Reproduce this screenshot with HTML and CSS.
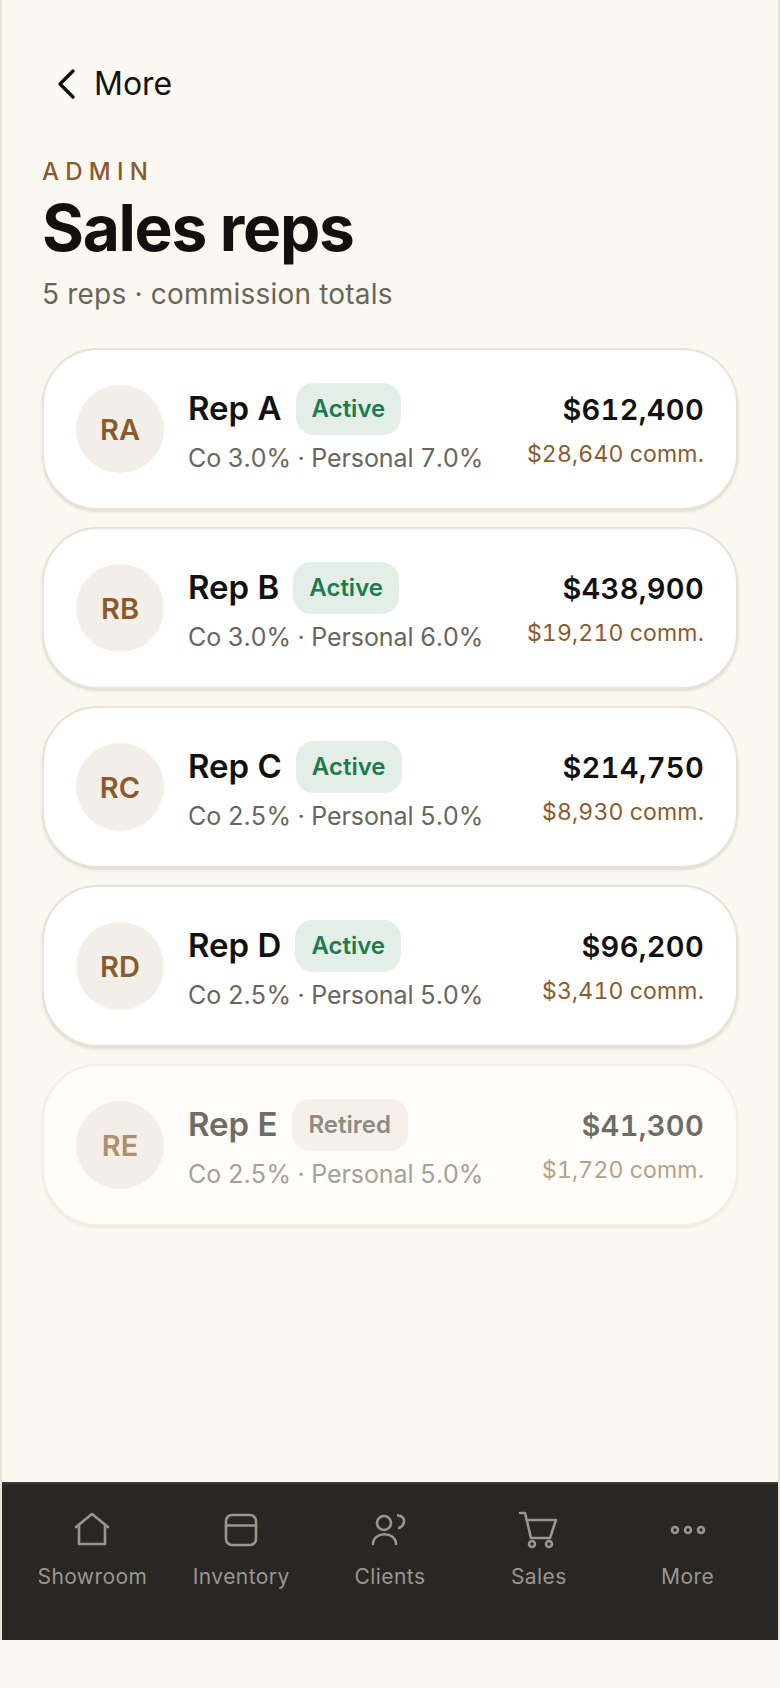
FILE: index.html
```html
<!DOCTYPE html>
<html lang="en">
<head>
  <meta charset="UTF-8">
  <title>Sales reps</title>
  <link rel="stylesheet" href="styles.css">
</head>
<body>

  <div class="shell">
    <main class="content">
      <a class="back">
        <svg class="back-icon" viewBox="0 0 24 32"><path d="M18 3 L5 16 L18 29"/></svg>
        More
      </a>

      <div class="eyebrow">ADMIN</div>
      <h1>Sales reps</h1>
      <p class="subtitle">5 reps · commission totals</p>

      <div class="rep-list">
        <div class="rep">
          <div class="avatar">RA</div>
          <div class="rep-info">
            <div class="rep-head"><span class="rep-name">Rep A</span><span class="badge">Active</span></div>
            <div class="rep-rates">Co 3.0% · Personal 7.0%</div>
          </div>
          <div class="rep-totals">
            <div class="amount">$612,400</div>
            <div class="comm">$28,640 comm.</div>
          </div>
        </div>

        <div class="rep">
          <div class="avatar">RB</div>
          <div class="rep-info">
            <div class="rep-head"><span class="rep-name">Rep B</span><span class="badge">Active</span></div>
            <div class="rep-rates">Co 3.0% · Personal 6.0%</div>
          </div>
          <div class="rep-totals">
            <div class="amount">$438,900</div>
            <div class="comm">$19,210 comm.</div>
          </div>
        </div>

        <div class="rep">
          <div class="avatar">RC</div>
          <div class="rep-info">
            <div class="rep-head"><span class="rep-name">Rep C</span><span class="badge">Active</span></div>
            <div class="rep-rates">Co 2.5% · Personal 5.0%</div>
          </div>
          <div class="rep-totals">
            <div class="amount">$214,750</div>
            <div class="comm">$8,930 comm.</div>
          </div>
        </div>

        <div class="rep">
          <div class="avatar">RD</div>
          <div class="rep-info">
            <div class="rep-head"><span class="rep-name">Rep D</span><span class="badge">Active</span></div>
            <div class="rep-rates">Co 2.5% · Personal 5.0%</div>
          </div>
          <div class="rep-totals">
            <div class="amount">$96,200</div>
            <div class="comm">$3,410 comm.</div>
          </div>
        </div>

        <div class="rep retired">
          <div class="avatar">RE</div>
          <div class="rep-info">
            <div class="rep-head"><span class="rep-name">Rep E</span><span class="badge">Retired</span></div>
            <div class="rep-rates">Co 2.5% · Personal 5.0%</div>
          </div>
          <div class="rep-totals">
            <div class="amount">$41,300</div>
            <div class="comm">$1,720 comm.</div>
          </div>
        </div>
      </div>
    </main>

    <nav class="tabbar">
      <div class="tab">
        <svg viewBox="0 0 44 44"><path d="M6 20 L22 7 L38 20"/><path d="M9 18 V37 H35 V18"/></svg>
        <span>Showroom</span>
      </div>
      <div class="tab">
        <svg viewBox="0 0 44 44"><rect x="7" y="8" width="30" height="30" rx="6"/><path d="M7 18.5 H37"/></svg>
        <span>Inventory</span>
      </div>
      <div class="tab">
        <svg viewBox="0 0 44 44"><circle cx="16" cy="16" r="7"/><path d="M5 37 C5 24 28 24 28 37"/><path class="butt" d="M29 8.5 C34 8 36.5 12 36 15 C35.5 18 33 21 30 21"/></svg>
        <span>Clients</span>
      </div>
      <div class="tab">
        <svg viewBox="0 0 44 44"><path d="M3 6 H8 L14 31 H33 L39 13 H9.5"/><circle cx="15" cy="37" r="3"/><circle cx="32" cy="37" r="3"/></svg>
        <span>Sales</span>
      </div>
      <div class="tab">
        <svg viewBox="0 0 44 44"><circle cx="9" cy="23" r="3"/><circle cx="22" cy="23" r="3"/><circle cx="35" cy="23" r="3"/></svg>
        <span>More</span>
      </div>
    </nav>
  </div>

</body>
</html>
```

FILE: styles.css
```css
* {
  box-sizing: border-box;
}

html, body {
  margin: 0;
  padding: 0;
}

body {
  width: 780px;
  height: 1688px;
  background: #fbf8f1;
  color: #12110f;
  font-family: "Inter", "Liberation Sans", sans-serif;
  overflow: hidden;
}

.shell {
  height: 1640px;
  display: flex;
  flex-direction: column;
  border-left: 2px solid #e8e2d8;
  border-right: 2px solid #e8e2d8;
}

.content {
  flex: 1;
  padding: 62px 40px 0;
}

.back {
  display: flex;
  align-items: center;
  gap: 15px;
  margin-left: 13px;
  height: 44px;
  font-size: 32px;
  line-height: 44px;
}

.back-icon {
  width: 24px;
  height: 32px;
  fill: none;
  stroke: #12110f;
  stroke-width: 3.4;
  stroke-linecap: round;
  stroke-linejoin: round;
}

.eyebrow {
  margin-top: 50px;
  font-size: 24px;
  line-height: 32px;
  font-weight: 500;
  letter-spacing: 0.26em;
  color: #8a5a2f;
}

h1 {
  margin: 4px 0 0;
  font-size: 64px;
  line-height: 72px;
  font-weight: 700;
  letter-spacing: -0.02em;
}

.subtitle {
  margin: 10px 0 0;
  font-size: 28px;
  line-height: 40px;
  letter-spacing: 0.2px;
  color: #6a655c;
}

.rep-list {
  margin-top: 34px;
  display: flex;
  flex-direction: column;
  gap: 17px;
}

.rep {
  display: flex;
  align-items: center;
  height: 162px;
  padding: 0 32px;
  background: #fff;
  border: 2px solid #e8e2d8;
  border-radius: 56px;
  box-shadow: 0 2px 3px rgba(60, 50, 30, 0.14);
}

.avatar {
  flex: none;
  width: 88px;
  height: 88px;
  display: flex;
  align-items: center;
  justify-content: center;
  border-radius: 50%;
  background: #f3efe8;
  color: #8a5a2f;
  font-size: 29px;
  font-weight: 600;
}

.rep-info {
  flex: 1;
  margin-left: 24px;
  min-width: 0;
}

.rep-head {
  display: flex;
  align-items: center;
  gap: 14px;
}

.rep-name {
  margin-bottom: 4px;
  font-size: 33px;
  font-weight: 600;
}

.badge {
  margin-bottom: 2px;
  padding: 0 16px;
  height: 52px;
  line-height: 52px;
  border-radius: 18px;
  background: #e3eee8;
  color: #1f7a4d;
  font-size: 24px;
  font-weight: 600;
}

.rep-rates {
  margin-top: 3px;
  font-size: 25px;
  line-height: 36px;
  letter-spacing: -0.1px;
  font-variant-numeric: tabular-nums;
  color: #6a655c;
  white-space: nowrap;
}

.rep-totals {
  padding-top: 2px;
  text-align: right;
  white-space: nowrap;
  font-variant-numeric: tabular-nums;
}

.amount {
  font-size: 29px;
  line-height: 40px;
  font-weight: 600;
  letter-spacing: 0.3px;
}

.comm {
  margin-top: 7px;
  font-size: 23px;
  line-height: 34px;
  letter-spacing: 0.15px;
  color: #8a5a2f;
}

.retired {
  background: #fefdfa;
  border-color: #f3efe8;
  box-shadow: 0 2px 3px rgba(60, 50, 30, 0.07);
}

.retired .rep-name,
.retired .amount {
  color: #6f6c66;
}

.retired .rep-rates {
  color: #a5a197;
}

.retired .avatar {
  color: #b08f6f;
}

.retired .comm {
  color: #b8a083;
}

.retired .badge {
  padding: 0 17px;
  background: #f5f1ea;
  color: #8e8b83;
}

.tabbar {
  flex: none;
  height: 158px;
  display: grid;
  grid-template-columns: repeat(5, 1fr);
  padding: 0 16px;
  background: #282725;
  border-top: 2px solid #3c3a36;
}

.tab {
  display: flex;
  flex-direction: column;
  align-items: center;
  padding-top: 23px;
  gap: 10px;
  color: #9a968c;
  font-size: 21px;
  letter-spacing: 0.02em;
  line-height: 32px;
}

.tab svg {
  width: 44px;
  height: 44px;
  fill: none;
  stroke: #9a968c;
  stroke-width: 2.6;
  stroke-linecap: round;
  stroke-linejoin: round;
}

.tab svg .butt {
  stroke-linecap: butt;
}
```
